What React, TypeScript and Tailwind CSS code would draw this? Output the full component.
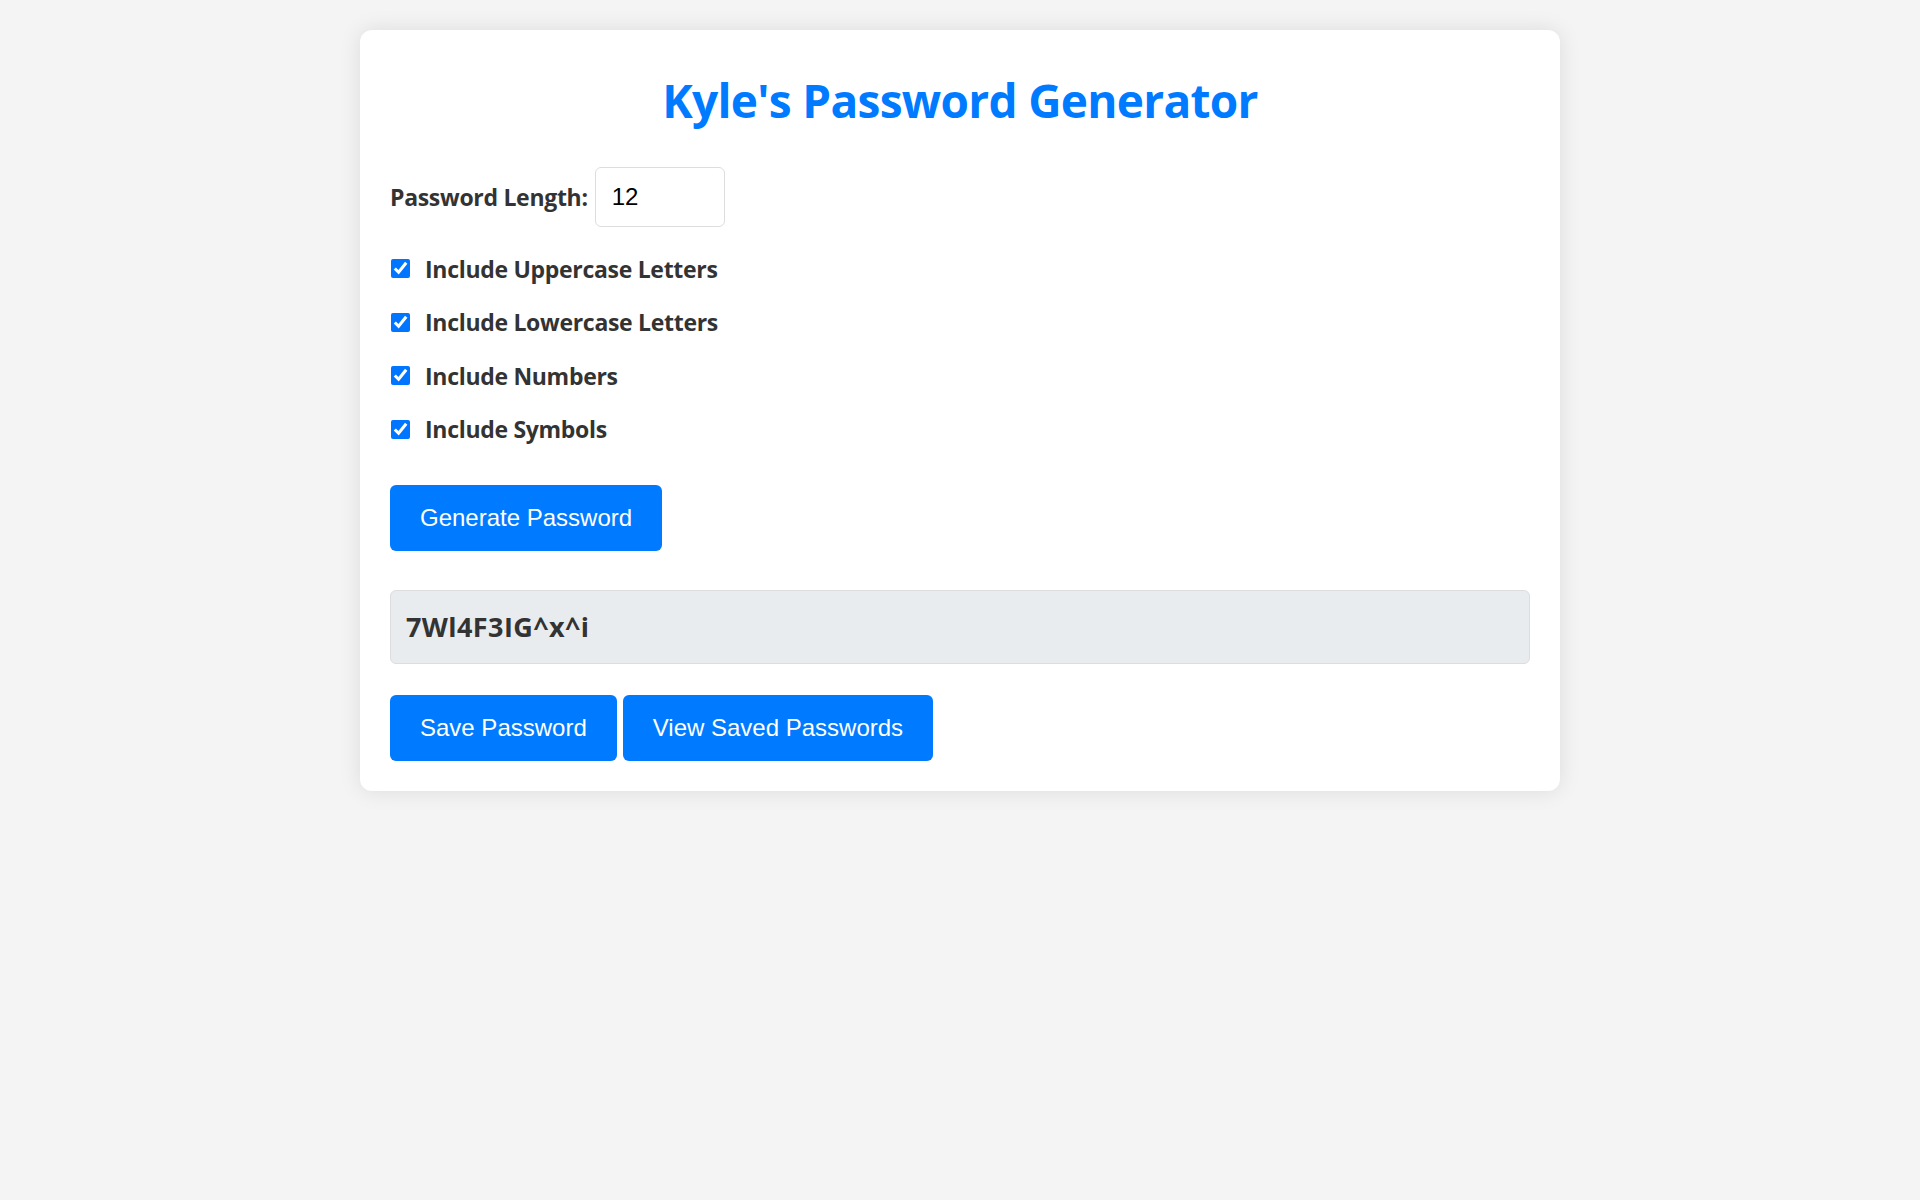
import React, { useState } from 'react';

const options = [
    'Include Uppercase Letters',
    'Include Lowercase Letters',
    'Include Numbers',
    'Include Symbols',
];

export default function App() {
    const [length, setLength] = useState('12');
    const [checked, setChecked] = useState([true, true, true, true]);
    const [password] = useState('7Wl4F3IG^x^i');

    const toggle = (i: number) => {
        setChecked(prev => prev.map((v, idx) => (idx === i ? !v : v)));
    };

    return (
        <div className="min-h-screen w-full bg-[#f4f4f4] pt-[30px] font-['Open_Sans',sans-serif] text-[#333]">
            <div className="mx-auto w-[1200px] rounded-[12px] bg-white px-[30px] pt-[30px] pb-[30px] shadow-[0_0_22px_rgba(0,0,0,0.1)]">
                <div className="flex h-[80px] items-center justify-center">
                    <h1 className="text-[46px] font-bold leading-none tracking-[-0.7px] text-[#007bff]">Kyle's Password Generator</h1>
                </div>

                <div className="mt-[27px] flex h-[60px] items-center">
                    <label className="text-[23px] font-bold tracking-[-0.3px]">Password Length:</label>
                    <input
                        type="number"
                        value={length}
                        onChange={e => setLength(e.target.value)}
                        className="ml-[7px] h-[60px] w-[130px] rounded-[6px] border-[1.5px] border-[#ddd] px-[16px] font-['Liberation_Sans',Arial,sans-serif] text-[24px] text-black outline-none"
                    />
                </div>

                <div className="mt-[15px] flex flex-col">
                    {options.map((label, i) => (
                        <label key={label} className="flex h-[53.5px] items-center">
                            <input
                                type="checkbox"
                                checked={checked[i]}
                                onChange={() => toggle(i)}
                                className="ml-[1px] h-[19px] w-[19px] accent-[#0075ff]"
                            />
                            <span className="ml-[15px] text-[23px] font-bold tracking-[-0.3px]">{label}</span>
                        </label>
                    ))}
                </div>

                <button className="mt-[29px] h-[66px] rounded-[6px] bg-[#007bff] px-[30px] font-['Liberation_Sans',Arial,sans-serif] text-[24px] text-white">
                    Generate Password
                </button>

                <div className="mt-[39px] flex h-[74px] items-center rounded-[6px] border-[1.5px] border-[#ddd] bg-[#e9ecef] px-[15px] text-[27px] font-bold tracking-[0.4px]">
                    {password}
                </div>

                <div className="mt-[31px] flex gap-[6px]">
                    <button className="h-[66px] rounded-[6px] bg-[#007bff] px-[30px] font-['Liberation_Sans',Arial,sans-serif] text-[24px] text-white">
                        Save Password
                    </button>
                    <button className="h-[66px] rounded-[6px] bg-[#007bff] px-[30px] font-['Liberation_Sans',Arial,sans-serif] text-[24px] text-white">
                        View Saved Passwords
                    </button>
                </div>
            </div>
        </div>
    );
}
